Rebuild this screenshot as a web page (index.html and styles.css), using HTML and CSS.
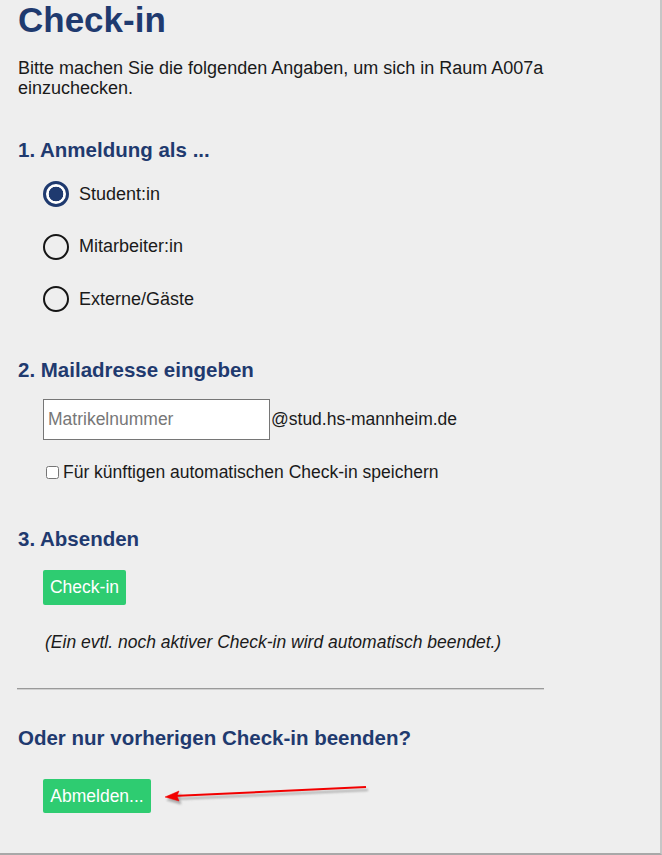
FILE: index.html
```html
<!DOCTYPE html>
<html lang="de">
<head>
<meta charset="utf-8">
<title>Check-in</title>
<link rel="stylesheet" href="styles.css">
</head>
<body>
<div class="page">
  <main class="content">
    <h1 class="title">Check-in</h1>
    <p class="intro">Bitte machen Sie die folgenden Angaben, um sich in Raum A007a einzuchecken.</p>

    <h2 class="step step-1">1. Anmeldung als ...</h2>
    <div class="radios">
      <label class="radio-row"><input type="radio" name="role" class="radio" checked><span>Student:in</span></label>
      <label class="radio-row"><input type="radio" name="role" class="radio"><span>Mitarbeiter:in</span></label>
      <label class="radio-row"><input type="radio" name="role" class="radio"><span>Externe/Gäste</span></label>
    </div>

    <h2 class="step step-2">2. Mailadresse eingeben</h2>
    <div class="mail-row">
      <input type="text" class="mail-input" placeholder="Matrikelnummer">
      <span class="domain">@stud.hs-mannheim.de</span>
    </div>
    <label class="check-row"><input type="checkbox" class="check"><span>Für künftigen automatischen Check-in speichern</span></label>

    <h2 class="step step-3">3. Absenden</h2>
    <div class="btn-wrap"><button class="btn btn-checkin">Check-in</button></div>
    <p class="note">(Ein evtl. noch aktiver Check-in wird automatisch beendet.)</p>

    <hr class="divider">

    <h2 class="step step-4">Oder nur vorherigen Check-in beenden?</h2>
    <div class="btn-wrap btn-wrap-2"><button class="btn btn-logout">Abmelden...</button></div>
  </main>

  <svg class="arrow" width="240" height="40" viewBox="0 0 240 40" aria-hidden="true">
    <defs>
      <filter id="sh" x="-10%" y="-50%" width="120%" height="200%">
        <feGaussianBlur stdDeviation="1.2"/>
      </filter>
    </defs>
    <g transform="translate(2,3)" fill="#9a9a9a" stroke="#9a9a9a" filter="url(#sh)" opacity="0.8">
      <line x1="215" y1="7" x2="22" y2="16" stroke-width="2"/>
      <polygon points="14,17 28,11 26,16 28,21"/>
    </g>
    <g fill="#f20000" stroke="#f20000">
      <line x1="215" y1="7" x2="22" y2="16" stroke-width="2"/>
      <polygon points="14,17 28,11 26,16 28,21" stroke-width="0.5"/>
    </g>
  </svg>
</div>
</body>
</html>
```

FILE: styles.css
```css
html, body {
  margin: 0;
  padding: 0;
  background: #eeeeee;
}

body {
  font-family: "Liberation Sans", Arial, sans-serif;
  color: #1a1a1a;
}

.page {
  position: relative;
  box-sizing: border-box;
  width: 662px;
  height: 855px;
  background: #eeeeee;
  border-right: 2px solid #c6c6c6;
  border-bottom: 2px solid #a8a8a8;
  overflow: hidden;
}

.content {
  width: 527px;
  padding-left: 18px;
}

.title {
  margin: 0;
  font-size: 35px;
  line-height: 40px;
  font-weight: bold;
  color: #1f3a6f;
}

.intro {
  margin: 18px 0 0;
  font-size: 18px;
  line-height: 20px;
}

.step {
  margin: 0;
  font-size: 20.5px;
  line-height: 24px;
  font-weight: bold;
  color: #1f3a6f;
}

.step-1 { margin-top: 40px; }
.step-2 { margin-top: 46px; }
.step-3 { margin-top: 45px; }
.step-4 { margin-top: 36px; }

.radios {
  margin-top: 19px;
  padding-left: 25px;
  display: flex;
  flex-direction: column;
  gap: 26.5px;
}

.radio-row {
  display: flex;
  align-items: center;
  gap: 10px;
  height: 26px;
  font-size: 18px;
}

.radio {
  appearance: none;
  -webkit-appearance: none;
  margin: 0;
  box-sizing: border-box;
  width: 26px;
  height: 26px;
  border: 2px solid #151515;
  border-radius: 50%;
  background: transparent;
}

.radio:checked {
  border: 3px solid #1f3a6f;
  background: radial-gradient(circle, #1f3a6f 0 7px, #ffffff 7.6px);
}

.mail-row {
  margin-top: 17px;
  padding-left: 25px;
  display: flex;
  align-items: center;
}

.mail-input {
  box-sizing: border-box;
  width: 227px;
  height: 41px;
  margin: 0;
  padding: 0 4px;
  border: 1px solid #767676;
  border-radius: 0;
  background: #ffffff;
  font-family: "Liberation Sans", Arial, sans-serif;
  font-size: 17.5px;
  color: #1a1a1a;
}

.mail-input::placeholder {
  color: #777777;
}

.domain {
  margin-left: 1px;
  font-size: 17.5px;
}

.check-row {
  margin-top: 22px;
  padding-left: 25px;
  display: flex;
  align-items: center;
  height: 20px;
  font-size: 17.5px;
  line-height: 20px;
}

.check {
  margin: 0 4px 0 3px;
  width: 13px;
  height: 13px;
}

.btn-wrap {
  margin-top: 19px;
  padding-left: 25px;
}

.btn-wrap-2 {
  margin-top: 29px;
}

.btn {
  border: none;
  border-radius: 2px;
  background: #2ecc71;
  color: #ffffff;
  font-family: "Liberation Sans", Arial, sans-serif;
  font-size: 17.5px;
  padding: 0 4px;
  margin: 0;
  white-space: nowrap;
}

.btn-checkin {
  height: 35px;
  width: 83px;
}

.btn-logout {
  height: 34px;
  width: 108px;
}

.note {
  margin: 27px 0 0;
  padding-left: 27px;
  font-size: 17.5px;
  line-height: 20px;
  font-style: italic;
}

.divider {
  margin: 36px 0 0 -1px;
  width: 527px;
  height: 0;
  border: none;
  border-top: 1px solid #9a9a9a;
  border-bottom: 1px solid #d0d0d0;
}

.arrow {
  position: absolute;
  left: 151px;
  top: 780px;
}
```
